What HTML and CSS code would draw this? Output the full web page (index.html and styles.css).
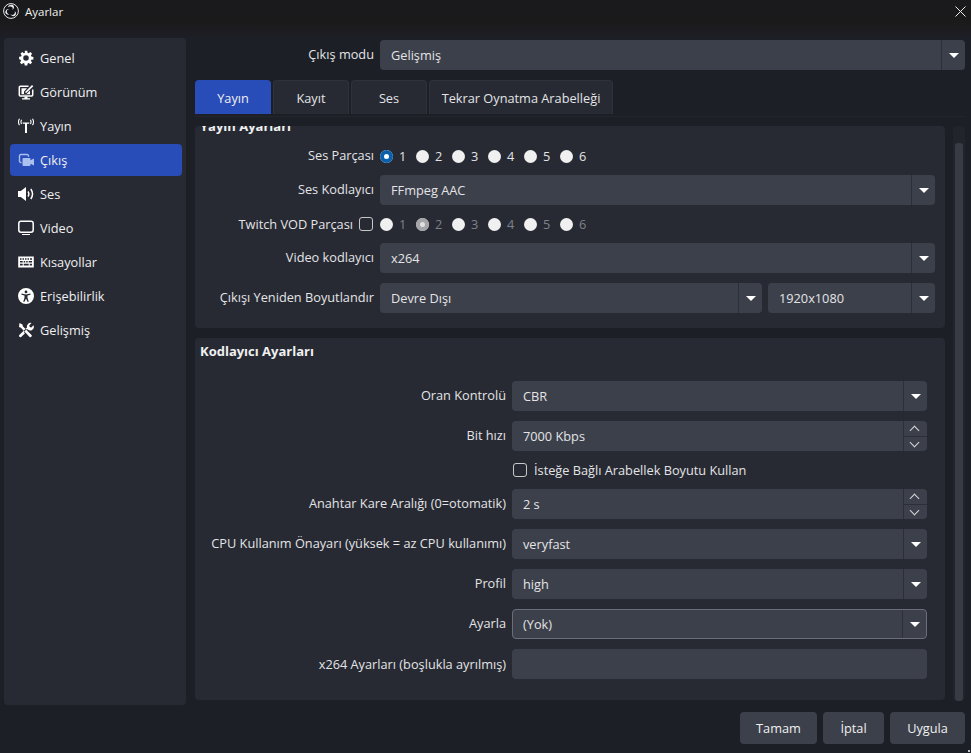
FILE: index.html
```html
<!DOCTYPE html>
<html lang="tr">

<head>
  <meta charset="UTF-8">
  <title>Ayarlar</title>
  <link rel="stylesheet" href="styles.css">
</head>

<body>
  <div class="window">
    <!-- title bar -->
    <div class="titleBar">
      <svg class="obsLogo" viewBox="0 0 16 16">
        <circle cx="8" cy="8" r="7.4" fill="#14151a" stroke="#e6e6e6" stroke-width="1"/>
        <path d="M8.200 1.800a3.400 3.400 0 0 0-3.400 2.800c.7-.9 1.700-1.200 2.800-1a2.500 2.500 0 0 1 1.900 3.300 3.100 3.100 0 0 0 .6-4.900 3 3 0 0 0-1.900-.2z" fill="#e6e6e6"/>
        <path d="M2.300 9.700a3.400 3.400 0 0 0 4.100 1.700c-1.100-.1-1.900-.8-2.300-1.900a2.500 2.500 0 0 1 1.900-3.300 3.100 3.100 0 0 0-3.700 3.500z" fill="#e6e6e6"/>
        <path d="M12.300 12.500a3.400 3.400 0 0 0-.6-4.500c.4 1 .3 2.100-.5 3a2.500 2.500 0 0 1-3.800 0 3.100 3.100 0 0 0 4.900 1.500z" fill="#e6e6e6"/>
      </svg>
      <span class="titleText">Ayarlar</span>
      <svg class="closeIcon" viewBox="0 0 11 11"><path d="M.5.5l10 10M10.500.5l-10 10" stroke="#eee" stroke-width="1" fill="none"/></svg>
    </div>

    <div class="mainArea">
      <!-- sidebar -->
      <div class="sideNav">
        <div class="navItem">
          <svg class="navIcon" viewBox="-1.500 -1.500 19 19"><path fill-rule="evenodd" fill="#fff" d="M6.500 0h3l.4 2.300 1.300.6L13.100 1.500l2.100 2.100-1.400 1.900.6 1.300 2.400.4v3l-2.400.4-.6 1.300 1.400 1.900-2.100 2.100-1.900-1.400-1.300.6-.4 2.300h-3l-.4-2.300-1.300-.6-1.900 1.400-2.100-2.100 1.400-1.900-.6-1.300L-.2 10V7l2.400-.4.6-1.300L1.400 3.600l2.100-2.100 1.900 1.400 1.300-.6zM8 5.200a3.300 3.300 0 1 0 0 6.600 3.300 3.300 0 0 0 0-6.600z" transform="translate(0 -.5)"/></svg>
          <span>Genel</span>
        </div>
        <div class="navItem">
          <svg class="navIcon" viewBox="0 0 16 16"><path fill="none" stroke="#fff" stroke-width="1.500" d="M10.500 2.300H2.300a1 1 0 0 0-1 1v7.700a1 1 0 0 0 1 1h11.400a1 1 0 0 0 1-1V5.500"/><path fill="#fff" d="M3.500 4.300h5.500L6 7.500v2.500h2.500l3.500-3.500V10.300H3.500zM7.300 7.800L14 1l1.300 1.300L8.500 8.800H7.300zM6.500 12.500h3v1.700h2.500V15.500H4v-1.300h2.500z"/></svg>
          <span>Görünüm</span>
        </div>
        <div class="navItem">
          <svg class="navIcon" viewBox="0 0 16 16"><path fill="#fff" d="M4.500 4.500h7l-.4 1.300H9V15H7V5.800H4.900z"/><path fill="none" stroke="#fff" stroke-width="1.100" d="M3.600 1.800c-.8 1.300-.8 2.900 0 4.200M12.400 1.800c.8 1.300.8 2.900 0 4.200M1.500 .8c-1.300 2-1.300 4.300 0 6.300M14.500 .8c1.300 2 1.300 4.300 0 6.300"/></svg>
          <span>Yayın</span>
        </div>
        <div class="navItem navItemActive">
          <svg class="navIcon" viewBox="0 0 16 16"><path fill="none" stroke="#a9c0f0" stroke-width="1.400" d="M3.500 10.500H2.800a1.300 1.300 0 0 1-1.300-1.300V3.800a1.300 1.300 0 0 1 1.300-1.300h6.400a1.300 1.300 0 0 1 1.300 1.300v1"/><path fill="#a9c0f0" d="M5.500 6h6a1 1 0 0 1 1 1v1.200L16 6.500v7l-3.500-1.700V13a1 1 0 0 1-1 1h-6a1 1 0 0 1-1-1V7a1 1 0 0 1 1-1z"/></svg>
          <span>Çıkış</span>
        </div>
        <div class="navItem">
          <svg class="navIcon" viewBox="0 0 16 16"><path fill="#fff" d="M0 5h2.800L8 1v14L2.800 11H0z"/><path fill="none" stroke="#fff" stroke-width="1.500" d="M10 5.500c1 1.500 1 3.500 0 5M12.800 3c2 2.900 2 7.100 0 10"/></svg>
          <span>Ses</span>
        </div>
        <div class="navItem">
          <svg class="navIcon" viewBox="0 0 16 16"><rect x=".8" y="1.300" width="14.400" height="11" rx="2.200" fill="none" stroke="#fff" stroke-width="1.500"/><path fill="#fff" d="M4 14h8v1H4z"/></svg>
          <span>Video</span>
        </div>
        <div class="navItem">
          <svg class="navIcon" viewBox="0 0 16 16"><path fill="#fff" fill-rule="evenodd" d="M.2 2.500h15.600v11H.2zM2 4.200v1.500h1.500V4.200zm2.500 0v1.500H6V4.200zm2.500 0v1.500h1.500V4.200zm2.500 0v1.500H11V4.200zm2.500 0v1.500h2V4.200zM2 7v1.500h2.700V7zm3.700 0v1.500h1.500V7zm2.500 0v1.500h1.500V7zm2.500 0v1.500H14V7zM2 9.800v1.700h2.700V9.800zm3.700 0v1.700h5V9.800zm6 0v1.700H14V9.800z"/></svg>
          <span>Kısayollar</span>
        </div>
        <div class="navItem">
          <svg class="navIcon" viewBox="0 0 16 16"><path fill="#fff" fill-rule="evenodd" d="M8 0a8 8 0 1 1 0 16A8 8 0 0 1 8 0zm0 2.500a1.400 1.400 0 1 0 0 2.800 1.400 1.400 0 0 0 0-2.800zM3.500 5.500v1.200l3 .8v2.300l-1.300 4h1.300L8 10.500l1.500 3.300h1.300l-1.300-4V7.500l3-.8V5.500L8 6.500z"/></svg>
          <span>Erişebilirlik</span>
        </div>
        <div class="navItem">
          <svg class="navIcon" viewBox="0 0 16 16"><path fill="#fff" d="M1.500 1l3 1.500.3 1.800 8.700 8.700a1 1 0 0 1 0 1.400l-.5.500a1 1 0 0 1-1.400 0L2.900 5.700 1 5zM15.500 3.200l-2.200 2.200-1.600-.5-.4-1.600L13.500 1A3.700 3.700 0 0 0 9 5.500L1.300 13a1.400 1.400 0 0 0 1.900 2L7 11.200 5.800 10l3-3 1 .6a3.700 3.700 0 0 0 5.700-4.400z"/></svg>
          <span>Gelişmiş</span>
        </div>
      </div>

      <!-- settings -->
      <div class="content">
        <div class="modeRow">
          <label class="fieldLabel">Çıkış modu</label>
          <div class="combo"><span>Gelişmiş</span><i class="comboBtn"><b class="arrow"></b></i></div>
        </div>

        <div class="tabs">
          <div class="tab tabActive">Yayın</div>
          <div class="tab">Kayıt</div>
          <div class="tab">Ses</div>
          <div class="tab tabWide">Tekrar Oynatma Arabelleği</div>
        </div>

        <div class="tabPane">
          <div class="scrollArea">
            <div class="groupList">
              <div class="group groupStream">
                <div class="groupTitle clippedTitle">Yayın Ayarları</div>
                <div class="formRow rowShort">
                  <label class="fieldLabel">Ses Parçası</label>
                  <div class="radios">
                    <span class="radio radioOn">1</span><span class="radio">2</span><span class="radio">3</span><span class="radio">4</span><span class="radio">5</span><span class="radio">6</span>
                  </div>
                </div>
                <div class="formRow">
                  <label class="fieldLabel">Ses Kodlayıcı</label>
                  <div class="combo"><span>FFmpeg AAC</span><i class="comboBtn"><b class="arrow"></b></i></div>
                </div>
                <div class="formRow rowShort">
                  <label class="fieldLabel labelWithCheck">Twitch VOD Parçası<span class="check"></span></label>
                  <div class="radios">
                    <span class="radio radioOff">1</span><span class="radio radioOff radioGrey">2</span><span class="radio radioOff">3</span><span class="radio radioOff">4</span><span class="radio radioOff">5</span><span class="radio radioOff">6</span>
                  </div>
                </div>
                <div class="formRow">
                  <label class="fieldLabel">Video kodlayıcı</label>
                  <div class="combo"><span>x264</span><i class="comboBtn"><b class="arrow"></b></i></div>
                </div>
                <div class="formRow">
                  <label class="fieldLabel">Çıkışı Yeniden Boyutlandır</label>
                  <div class="comboPair">
                    <div class="combo"><span>Devre Dışı</span><i class="comboBtn"><b class="arrow"></b></i></div>
                    <div class="combo comboSmall"><span>1920x1080</span><i class="comboBtn"><b class="arrow"></b></i></div>
                  </div>
                </div>
              </div>

              <div class="group groupEncoder">
                <div class="groupTitle">Kodlayıcı Ayarları</div>
                <div class="formRow">
                  <label class="fieldLabel">Oran Kontrolü</label>
                  <div class="combo"><span>CBR</span><i class="comboBtn"><b class="arrow"></b></i></div>
                </div>
                <div class="formRow">
                  <label class="fieldLabel">Bit hızı</label>
                  <div class="combo"><span>7000 Kbps</span><i class="spinBtn"><b class="chev chevUp"></b><b class="chev chevDown"></b></i></div>
                </div>
                <div class="formRow rowShort">
                  <label class="fieldLabel"></label>
                  <div class="checkRow"><span class="check"></span>İsteğe Bağlı Arabellek Boyutu Kullan</div>
                </div>
                <div class="formRow">
                  <label class="fieldLabel">Anahtar Kare Aralığı (0=otomatik)</label>
                  <div class="combo"><span>2 s</span><i class="spinBtn"><b class="chev chevUp"></b><b class="chev chevDown"></b></i></div>
                </div>
                <div class="formRow">
                  <label class="fieldLabel">CPU Kullanım Önayarı (yüksek = az CPU kullanımı)</label>
                  <div class="combo"><span>veryfast</span><i class="comboBtn"><b class="arrow"></b></i></div>
                </div>
                <div class="formRow">
                  <label class="fieldLabel">Profil</label>
                  <div class="combo"><span>high</span><i class="comboBtn"><b class="arrow"></b></i></div>
                </div>
                <div class="formRow">
                  <label class="fieldLabel">Ayarla</label>
                  <div class="combo comboFocus"><span>(Yok)</span><i class="comboBtn"><b class="arrow"></b></i></div>
                </div>
                <div class="formRow rowInput">
                  <label class="fieldLabel">x264 Ayarları (boşlukla ayrılmış)</label>
                  <div class="combo"></div>
                </div>
              </div>
            </div>
            <div class="scrollBar"><div class="scrollThumb"></div></div>
          </div>
        </div>
      </div>
    </div>

    <!-- footer buttons -->
    <div class="footer">
      <div class="btn btnOk">Tamam</div>
      <div class="btn btnCancel">İptal</div>
      <div class="btn btnApply">Uygula</div>
    </div>
    <div class="sizeGrip"></div>
  </div>
</body>

</html>
```

FILE: styles.css
```css
* {
  box-sizing: border-box;
}

html,
body {
  margin: 0;
  height: 100%;
}

body {
  background: #1d1f26;
  color: #e4e4e6;
  font-family: "Open Sans", "Noto Sans", sans-serif;
  font-size: 12.75px;
  overflow: hidden;
}

.window {
  position: relative;
  width: 971px;
  height: 753px;
  display: flex;
  flex-direction: column;
}

.titleBar {
  height: 38px;
  flex: none;
  display: flex;
  align-items: flex-start;
  padding: 3px 5px 0 3px;
  background: linear-gradient(#1a1a1c 0, #1b1a1b 22px, #1d1f26 38px);
}

.obsLogo {
  width: 16px;
  height: 16px;
}

.titleText {
  margin-left: 6px;
  font-size: 11.5px;
  line-height: 18px;
  color: #f0f0f0;
}

.closeIcon {
  width: 11px;
  height: 11px;
  margin: 3px 0 0 auto;
}

.mainArea {
  flex: 1;
  min-height: 0;
  display: flex;
  padding-left: 4px;
}

.sideNav {
  width: 182px;
  height: 667px;
  flex: none;
  background: #272a33;
  border-radius: 4px;
  padding: 4px 4px 0 6px;
  display: flex;
  flex-direction: column;
  gap: 2px;
}

.navItem {
  height: 32px;
  flex: none;
  display: flex;
  align-items: center;
  gap: 6px;
  padding-left: 8px;
  border-radius: 4px;
  color: #f0f0f0;
}

.navItemActive {
  background: #284cb8;
}

.navIcon {
  width: 16px;
  height: 16px;
  flex: none;
}

.content {
  width: 770px;
  margin-left: 9px;
  flex: none;
  display: flex;
  flex-direction: column;
}

.modeRow {
  height: 30px;
  margin-top: 2px;
  display: grid;
  grid-template-columns: 179px 585px;
  column-gap: 6px;
}

.fieldLabel {
  text-align: right;
  align-self: center;
  position: relative;
  top: -1px;
  white-space: nowrap;
}

.labelWithCheck {
  display: flex;
  justify-content: flex-end;
  align-items: center;
  top: 0;
}

.combo {
  height: 30px;
  background: #3c404b;
  border-radius: 4px;
  display: flex;
  align-items: center;
  padding-left: 11px;
  min-width: 0;
  flex: 1;
  color: #e4e4e6;
}

.combo > span {
  flex: 1;
}

.comboFocus {
  border: 1px solid #6a6e79;
  padding-left: 10px;
}

.comboBtn,
.spinBtn {
  width: 24px;
  height: 100%;
  flex: none;
  border-left: 1px solid #2c2f38;
  display: flex;
  align-items: center;
  justify-content: center;
}

.spinBtn {
  flex-direction: column;
}

.arrow {
  width: 0;
  height: 0;
  border-left: 5px solid transparent;
  border-right: 5px solid transparent;
  border-top: 5px solid #fff;
}

.chev {
  flex: 1;
  width: 100%;
  position: relative;
}

.chevUp {
  border-bottom: 1px solid #2c2f38;
}

.chev::after {
  content: "";
  position: absolute;
  left: 7px;
  width: 6px;
  height: 6px;
  border-left: 1px solid #d8d8d8;
  border-top: 1px solid #d8d8d8;
}

.chevUp::after {
  top: 6px;
  transform: rotate(45deg);
}

.chevDown::after {
  top: 2px;
  transform: rotate(225deg);
}

.tabs {
  display: flex;
  gap: 2px;
  height: 34px;
  margin-top: 10px;
  flex: none;
}

.tab {
  width: 76px;
  background: #272a33;
  border: 1px solid #2f323b;
  border-bottom: 0;
  border-radius: 4px 4px 0 0;
  display: flex;
  align-items: center;
  justify-content: center;
  color: #e4e4e6;
}

.tabActive {
  background: #284cb8;
  border-color: #284cb8;
  color: #f0f0f0;
}

.tabWide {
  width: 184px;
}

.tabPane {
  margin-top: 2px;
  border-top: 1px solid #24262d;
  padding-top: 9px;
  height: 590px;
  flex: none;
}

.scrollArea {
  display: flex;
  height: 575px;
}

.groupList {
  width: 750px;
  flex: none;
  overflow: hidden;
  display: flex;
  flex-direction: column;
  gap: 10px;
}

.group {
  background: #272a33;
  border-radius: 4px;
  flex: none;
}

.groupStream {
  height: 202px;
  padding: 0 10px 0 0;
}

.groupEncoder {
  height: 362px;
  padding-right: 18px;
}

.groupTitle {
  font-size: 13px;
  font-weight: 700;
  color: #f0f0f0;
  padding-left: 5px;
  height: 43px;
  line-height: 27px;
}

.clippedTitle {
  height: 20px;
  line-height: 20px;
  margin-top: -10px;
  margin-bottom: 11px;
}

.formRow {
  display: grid;
  grid-template-columns: 179px 1fr;
  column-gap: 6px;
  height: 30px;
  margin-bottom: 10px;
}

.groupEncoder .formRow {
  grid-template-columns: 311px 1fr;
}

.rowShort {
  height: 18px;
  margin-bottom: 10px;
}

.rowInput {
  height: 32px;
}

.radios {
  display: flex;
  align-items: center;
  height: 18px;
}

.radio {
  display: flex;
  align-items: center;
  width: 36px;
  color: #e4e4e6;
}

.radio::before {
  content: "";
  width: 13px;
  height: 13px;
  border-radius: 50%;
  background: #f0f0f0;
  margin-right: 6px;
  flex: none;
}

.radioOn::before {
  background: #fff;
  box-shadow: inset 0 0 0 4px #0a60ad;
}

.radioOff {
  color: #7f828a;
}

.radioGrey::before {
  background: #e0e0e0;
  box-shadow: inset 0 0 0 4px #a3a5a9;
}

.check {
  width: 14px;
  height: 14px;
  border: 1px solid #c8c8ca;
  border-radius: 3px;
  flex: none;
}

.labelWithCheck .check {
  margin: 0 1px 0 6px;
}

.checkRow {
  display: flex;
  align-items: center;
  height: 18px;
  color: #e4e4e6;
}

.checkRow .check {
  margin: 0 7px 0 1px;
}

.comboPair {
  display: flex;
  gap: 6px;
}

.comboSmall {
  flex: none;
  width: 167px;
}

.scrollBar {
  width: 12px;
  height: 575px;
  margin-left: 8px;
  background: #22242b;
  border-radius: 4px;
  padding: 17px 2px 0;
}

.scrollThumb {
  height: 100%;
  background: #383b45;
  border-radius: 3px;
}

.footer {
  height: 48px;
  flex: none;
  display: flex;
  justify-content: flex-end;
  gap: 6px;
  padding: 7px 6px 9px 0;
}

.btn {
  background: #3c404b;
  border-radius: 4px;
  display: flex;
  align-items: center;
  justify-content: center;
  color: #f0f0f0;
}

.btnOk {
  width: 77px;
}

.btnCancel {
  width: 61px;
}

.btnApply {
  width: 75px;
}

.sizeGrip {
  position: absolute;
  right: 1px;
  bottom: 1px;
  width: 2px;
  height: 2px;
  background: #c8c8c8;
}
```
